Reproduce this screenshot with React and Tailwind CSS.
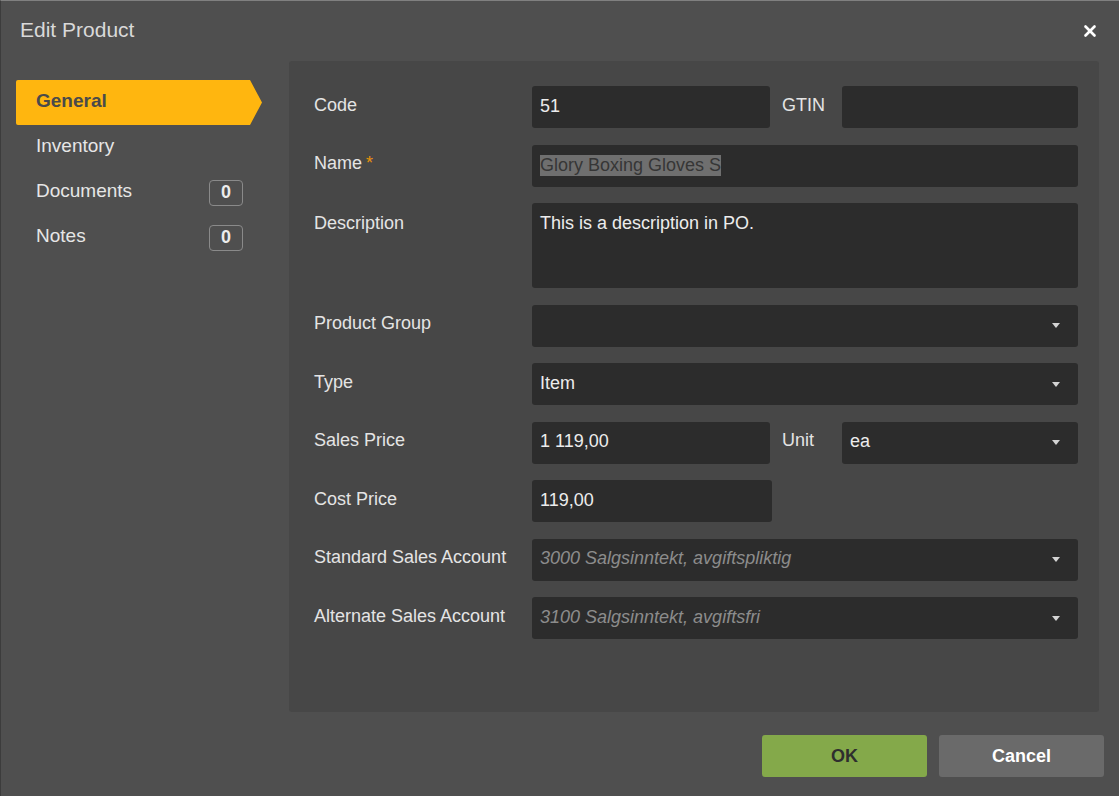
import { X } from 'lucide-react'

const font = { fontFamily: '"Liberation Sans", Arial, sans-serif' }

const Caret = () => (
  <svg width="8" height="5" viewBox="0 0 8 5" className="shrink-0">
    <path d="M0 0h8L4 5z" fill="#d4d4d4" />
  </svg>
)

const Field = ({ value, className = 'flex-1', placeholder }) => (
  <div className={`${className} h-[42px] bg-[#2c2c2c] rounded-[3px] flex items-center px-2 pb-[2px] text-[18px] text-[#ececec]`}>
    {placeholder ? <span className="italic text-[#8c8c8c]">{placeholder}</span> : value}
  </div>
)

const Select = ({ value, placeholder, className = 'flex-1' }) => (
  <div className={`${className} h-[42px] bg-[#2c2c2c] rounded-[3px] flex items-center justify-between pl-2 pr-[18px] text-[18px] text-[#ececec]`}>
    <span className={`pb-[2px] ${placeholder ? 'italic text-[#8c8c8c]' : ''}`}>{placeholder || value}</span>
    <Caret />
  </div>
)

const Row = ({ label, required, children, top = false }) => (
  <div className={`flex ${top ? 'items-start' : 'items-center'}`}>
    <div className={`w-[218px] shrink-0 text-[18px] text-[#e4e4e4] ${top ? 'pt-[7px]' : 'pb-[4px]'}`}>
      {label}
      {required && <span className="text-[#e8920c] ml-1">*</span>}
    </div>
    <div className="flex-1 flex items-center">{children}</div>
  </div>
)

const NavItem = ({ label, count, active }) => {
  if (active) {
    return (
      <div className="h-[45px] w-[246px] bg-[#ffb60f] rounded-l-[2px] flex items-center pl-5 pb-[2px] text-[19px] font-bold text-[#4a4a4a] [clip-path:polygon(0_0,234px_0,246px_50%,234px_100%,0_100%)]">
        {label}
      </div>
    )
  }
  return (
    <div className="h-[45px] w-[246px] flex items-center justify-between pl-5 pr-[19px] text-[19px] text-[#e6e6e6]">
      <span className="pb-[2px]">{label}</span>
      {count !== undefined && (
        <span className="w-[34px] h-[26px] border border-[#8a8a8a] rounded-[4px] flex items-center justify-center text-[18px] font-bold text-[#ececec]">
          {count}
        </span>
      )}
    </div>
  )
}

export default function App() {
  return (
    <div style={font} className="w-[1119px] h-[796px] bg-[#4f4f4f] border-t border-t-[#808080] border-l border-l-[#3c3c3c] flex flex-col overflow-hidden">
      {/* Header */}
      <div className="h-[60px] shrink-0 flex items-center justify-between pl-[19px] pr-[20px]">
        <span className="text-[21px] text-[#d9d9d9] pb-[2px]">Edit Product</span>
        <X className="w-[18px] h-[18px] text-white" strokeWidth={3.5} />
      </div>

      {/* Body */}
      <div className="flex-1 flex min-h-0">
        <nav className="w-[288px] shrink-0 pl-[15px] pt-[19px] flex flex-col">
          <NavItem label="General" active />
          <NavItem label="Inventory" />
          <NavItem label="Documents" count={0} />
          <NavItem label="Notes" count={0} />
        </nav>

        <div className="flex-1 mr-[20px] bg-[#474747] rounded-[3px] pl-[25px] pr-[21px] pt-[25px] flex flex-col gap-[16.5px]">
          <Row label="Code">
            <Field value="51" className="w-[238px]" />
            <span className="w-[72px] pl-3 pb-[4px] text-[18px] text-[#e4e4e4]">GTIN</span>
            <Field value="" />
          </Row>
          <Row label="Name" required>
            <div className="flex-1 h-[42px] bg-[#2c2c2c] rounded-[3px] flex items-center px-2 text-[18px]">
              <span className="bg-[#6f6f6f] text-[#363636] leading-[21px]">Glory Boxing Gloves S</span>
            </div>
          </Row>
          <Row label="Description" top>
            <div className="flex-1 h-[85px] bg-[#2c2c2c] rounded-[3px] px-2 pt-[7px] text-[18px] text-[#ececec]">
              This is a description in PO.
            </div>
          </Row>
          <Row label="Product Group">
            <Select value="" />
          </Row>
          <Row label="Type">
            <Select value="Item" />
          </Row>
          <Row label="Sales Price">
            <Field value="1 119,00" className="w-[238px]" />
            <span className="w-[72px] pl-3 pb-[4px] text-[18px] text-[#e4e4e4]">Unit</span>
            <Select value="ea" />
          </Row>
          <Row label="Cost Price">
            <Field value="119,00" className="w-[240px]" />
          </Row>
          <Row label="Standard Sales Account">
            <Select placeholder="3000 Salgsinntekt, avgiftspliktig" />
          </Row>
          <Row label="Alternate Sales Account">
            <Select placeholder="3100 Salgsinntekt, avgiftsfri" />
          </Row>
        </div>
      </div>

      {/* Footer */}
      <div className="h-[84px] shrink-0 flex items-start justify-end gap-3 pt-[23px] pr-[15px]">
        <button className="w-[165px] h-[42px] bg-[#84a94a] rounded-[3px] text-[18px] font-bold text-[#2e2e2e]">OK</button>
        <button className="w-[165px] h-[42px] bg-[#6a6a6a] rounded-[3px] text-[18px] font-bold text-white">Cancel</button>
      </div>
    </div>
  )
}
